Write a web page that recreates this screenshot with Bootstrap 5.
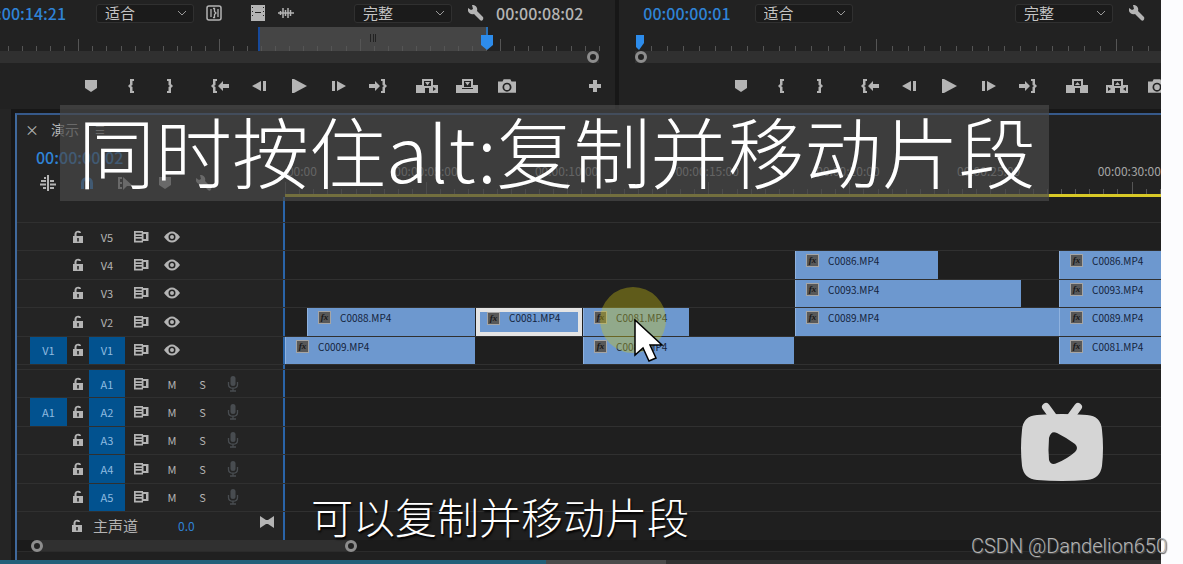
<!DOCTYPE html>
<html lang="zh-CN">
<head>
<meta charset="utf-8">
<meta name="viewport" content="width=device-width, initial-scale=1">
<title>同时按住alt:复制并移动片段</title>
<link href="https://cdn.jsdelivr.net/npm/bootstrap@5.3.0/dist/css/bootstrap.min.css" rel="stylesheet">
<style>
body{background:#fcfcfe;font-family:"Noto Sans CJK SC",sans-serif;font-size:11px;line-height:16px;color:#b4b4b4;overflow:hidden}
button{border:0;padding:0;background:none;color:inherit}
svg{display:block;flex:none}
.ic{width:16px;height:16px;fill:currentColor;stroke:none}
.ic-lg{width:24px;height:18px;fill:currentColor}
.frame{margin-right:22px;background:#171717}
.monitor{background:#222;height:109px}
.mon-source{flex:0 0 53%}
.mon-program{margin-left:4px}
.tc{font-size:16px;font-weight:500;line-height:24px;white-space:nowrap}
.tc-blue{color:#2f83d6}
.monbar{height:26px;margin-bottom:1px}
.pick{appearance:none;width:98px;height:19px;border:1px solid #303030;border-radius:3px;background:#1b1b1b url("data:image/svg+xml,%3Csvg xmlns='http://www.w3.org/2000/svg' viewBox='0 0 10 6'%3E%3Cpath d='M1 1l4 4 4-4' fill='none' stroke='%23999'/%3E%3C/svg%3E") no-repeat right 6px center/10px 6px;color:#c4c4c4;font-size:15px;line-height:16px;padding:0 8px}
.drag{margin-right:12px}
.ruler{height:24px}
.ticks{height:100%}
.ticks i{flex:1 1 0;width:0;height:5px;border-left:1px solid #555}
.ticks i:last-child{flex:0 0 1px}
.ticks i.big{height:12px}
.inout{top:0;bottom:0;left:42%;width:37%;background:#454545;border-left:2px solid #174a9c}
.grip{width:6px;height:8px;margin-top:7px;border:solid #222;border-width:0 1px;background:linear-gradient(#222,#222) center/1px 100% no-repeat}
.zoombar{height:12px;background:#303030}
.knob{width:12px;height:12px;border:3px solid #8d8d8d;border-radius:50%;background:#222;flex:none}
.transport{height:45px;padding-left:71px}
.mon-program .transport{padding-left:102px}
.tbtn{width:40px;height:24px;flex:none}
.side{width:11px;margin-right:4px;background:#252525}
.panel{margin-top:4px;border-left:2px solid #40699c;border-top:2px solid #36598a;background:#202020;min-width:0}
.headcol{width:268px;flex:none;background:#242424}
.tracks .headcol{border-right:2px solid #2a64a8}
.tophead{height:82px;padding:6px 0 0 8px}
.tabname{font-size:14px;margin-left:12px}
.tabclose{font-size:14px;line-height:16px}
.seqtime{padding:8px 0 6px 11px}
.toolrow{gap:23px;padding-left:15px}
.gapstrip{height:25px}
.lane{flex:1 1 0;min-width:0;overflow:hidden;background:#1f1f1f}
.video,.audio{display:grid;grid-template-rows:repeat(5,1fr);height:142px}
.trk{border-top:1px solid #303030;min-height:0}
.split{height:5px;border-top:1px solid #303030}
.cells{display:grid;grid-template-columns:37px 22px 36px 32px 30px 31px 30px;padding-left:13px}
.cells>*{display:flex;align-items:center;justify-content:center}
.on{background:#02528f;color:#8fbbe0}
.clip{position:absolute;top:0;bottom:0;background:#6d98cf;border-left:1px solid #8fb2df;color:#15243c;font-size:10px;padding:2px 0 0 10px;gap:9px;display:flex;align-items:start;white-space:nowrap;overflow:hidden}
.clip.sel{border:4px solid #e4e4e4;padding:0 0 0 7px;line-height:12px}
.clip.sel .fx{margin-top:0}
.fx{width:13px;height:13px;margin-top:1px;background:#585858;border:1px solid #a5a5a5;color:#171717;font:italic bold 9px/10px "Liberation Serif",serif;text-align:center;flex:none}
.tlabels{margin-left:-8%;font-size:12px;color:#a5a5a5}
.tlabels span{flex:0 0 14.87%;text-align:center}
.tlruler{height:18px;border-bottom:3px solid #d8c927}
.master{height:29px}
.bottomzoom{height:12px;background:#1b1b1b;border-bottom:1px solid #2b2b2b}
.bottomzoom .span{width:314px;margin-left:17px;background:#303030}
.progressline{height:4px;background:#313131}
.played{width:47%;background:#23607a}.loaded{width:10.4%;background:#4b4b4b}
.banner{left:60px;right:112px;top:105px;height:96px;background:rgba(72,72,72,.7);color:#fff;font-size:77px;line-height:90px;font-weight:300;padding-left:18px;white-space:nowrap}
.caption{left:311px;top:490px;font-size:42px;line-height:52px;font-weight:200;color:#fff;text-shadow:1px 2px 2px #000;white-space:nowrap}
.tvlogo{right:57px;top:402px;width:84px;height:80px}
.wmark{right:-8px;top:534px;font:300 20px/24px Roboto,sans-serif;color:#b4b4b4;text-shadow:1px 1px 1px #555;white-space:nowrap}
.halo{left:39.8%;top:90px;margin-left:-34px;width:66px;height:66px;border-radius:50%;background:rgba(212,200,20,.36)}
.arrow{left:39.8%;top:122px;width:30px;height:46px}
</style>
</head>
<body>
<svg class="d-none" aria-hidden="true">
<symbol id="marker" viewBox="0 0 16 16"><path d="M2 2h12v8l-6 4-6-4z"/></symbol>
<symbol id="bin" viewBox="0 0 16 16"><path d="M11 1H7v5L5 8l2 2v5h4v-2H9.500V9L8 8l1.500-1V3H11z"/></symbol>
<symbol id="bout" viewBox="0 0 16 16"><path d="M4 1h4v5l2 2-2 2v5H4v-2h1.500V9L7 8 5.500 7V3H4z"/></symbol>
<symbol id="goin" viewBox="0 0 24 18"><path d="M10 2H6v5L4 9l2 2v5h4v-2H8.500v-4L7 9l1.500-1V4H10zM11 9l5-5v3h6v4h-6v3z"/></symbol>
<symbol id="goout" viewBox="0 0 24 18"><path d="M14 2h4v5l2 2-2 2v5h-4v-2h1.500v-4L17 9l-1.500-1V4H14zM13 9L8 4v3H2v4h6v3z"/></symbol>
<symbol id="back" viewBox="0 0 16 16"><path d="M10 3v10L1 8zM12 3h3v10h-3z"/></symbol>
<symbol id="fwd" viewBox="0 0 16 16"><path d="M6 3v10l9-5zM1 3h3v10H1z"/></symbol>
<symbol id="play" viewBox="0 0 16 16"><path d="M1 1h2l13 7-13 7H1z"/></symbol>
<symbol id="insert" viewBox="0 0 24 18"><path d="M7 2h11v6h5v8h-9v-5h-4v5H1V8h6zm2 2v5h7V4zm1 1h5l-2.500 3.500zM18 10v4l3-2z" fill-rule="evenodd"/></symbol>
<symbol id="over" viewBox="0 0 24 18"><path d="M7 2h11v6h5v8H1V8h6zm2 2v6h7V4zm1 1h5l-2.500 3.500zM7 11v1h11v-1z" fill-rule="evenodd"/></symbol>
<symbol id="lift" viewBox="0 0 24 18"><path d="M7 2h11v6h5v8h-8v-5h-5v5H1V8h6zm2 2v5h7V4zm1 4l2.500-3L15 8z" fill-rule="evenodd"/></symbol>
<symbol id="extract" viewBox="0 0 24 18"><path d="M7 2h11v6h5v8h-8v-5h-5v5H1V8h6zm2 2v5h7V4zm1 4l2.500-3L15 8zM3 10v4l3-2zm18 0v4l-3-2z" fill-rule="evenodd"/></symbol>
<symbol id="cam" viewBox="0 0 18 16"><path d="M1 4h4l1-2h6l1 2h4v10H1zm8 1a4 4 0 100 8 4 4 0 000-8zm0 1.500a2.500 2.500 0 110 5 2.500 2.500 0 010-5z" fill-rule="evenodd"/></symbol>
<symbol id="plus" viewBox="0 0 16 16"><path d="M6 2h4v4h4v4h-4v4H6v-4H2V6h4z"/></symbol>
<symbol id="wrench" viewBox="0 0 16 16"><path d="M4 0l1 4-2 1L0 3c-1 4 2 7 6 6l6 6c2 2 4-1 3-3L9 6C10 3 8 0 4 0z"/></symbol>
<symbol id="brbox" viewBox="0 0 16 16"><rect x="1" y="1" width="14" height="14" rx="2" fill="none" stroke="currentColor" stroke-width="1.500"/><path d="M5 4v8M7 3.500h1.500v3L10 8l-1.500 1.500v3H7M12 4v8" fill="none" stroke="currentColor" stroke-width="1.300"/></symbol>
<symbol id="film" viewBox="0 0 16 16"><path d="M1 0h14v16H1zm1 2v1h1V2zm0 4v1h1V6zm0 4v1h1v-1zm11-8v1h1V2zm0 4v1h1V6zm0 4v1h1v-1zM5 7v1h6V7z" fill-rule="evenodd"/></symbol>
<symbol id="wave" viewBox="0 0 16 16"><path d="M0 8h16M2.500 6v4M5 3v10M7.500 5v6M10 3v10M12.500 5v6" stroke="currentColor" stroke-width="1.500"/></symbol>
<symbol id="lock" viewBox="0 0 16 16"><path d="M3 7h1.500V5c0-4 6.500-4.500 6.500-1H9c-.5-1-2.500-.8-2.500 1v2H13v7H3zm4.200 2v3.500h1.600V9z" fill-rule="evenodd"/></symbol>
<symbol id="sync" viewBox="0 0 16 16"><path d="M1 2h9v1h5.500v9H10v1.500H1zm1.700 1.700v1.600h6V3.700zm0 3.300v1h6V7zm0 2.700v2h6v-2zM10.500 5v5h2.500V5z" fill-rule="evenodd"/></symbol>
<symbol id="eye" viewBox="0 0 16 16"><path d="M0 8q8-11 16 0-8 11-16 0zm8-3.500a3.500 3.500 0 100 7 3.500 3.500 0 000-7zM8 6a2 2 0 110 4 2 2 0 010-4z" fill-rule="evenodd"/></symbol>
<symbol id="mic" viewBox="0 0 16 16"><rect x="5.500" y="0" width="5" height="10" rx="2.500"/><path d="M3.500 6v2.500c0 5 9 5 9 0V6M8 12v3M5 15h6" fill="none" stroke="currentColor" stroke-width="1.300"/></symbol>
<symbol id="nest" viewBox="0 0 16 16"><path d="M8 0v16M1 6h5M0 9.500h6M3 13h3M4 3h2M10 6h4M10 9.500h6M10 13h4" stroke="currentColor" stroke-width="2"/></symbol>
<symbol id="magnet" viewBox="0 0 16 16"><path d="M3.500 14V8c0-6 9-6 9 0v6" fill="none" stroke="currentColor" stroke-width="3"/></symbol>
<symbol id="linked" viewBox="0 0 16 16"><path d="M5 2l10 9H9l-4 4zM0 2h4v2H2v3h2v2H2v3h2v2H0z"/></symbol>
<symbol id="bowtie" viewBox="0 0 16 16"><path d="M1 2l6 4h2l6-4v12l-6-4H7l-6 4z"/></symbol>
</svg>

<main class="frame position-relative overflow-hidden">
  <div class="d-flex">
    <section class="monitor mon-source overflow-hidden">
      <div class="monbar d-flex align-items-center">
        <span class="tc tc-blue" style="margin-left:-3px">:00:14:21</span>
        <select class="pick ms-auto" aria-label="缩放级别"><option>适合</option></select>
        <button class="ms-2 ps-1" aria-label="范围"><svg class="ic"><use href="#brbox"/></svg></button>
        <button class="ms-4 ps-1" aria-label="仅视频"><svg class="ic"><use href="#film"/></svg></button>
        <button class="ms-2 ps-1 drag" aria-label="仅音频"><svg class="ic"><use href="#wave"/></svg></button>
        <select class="pick ms-5 me-3" aria-label="分辨率"><option>完整</option></select>
        <button aria-label="设置"><svg class="ic"><use href="#wrench"/></svg></button>
        <span class="tc ms-2 ps-1 pe-4 me-2">00:00:08:02</span>
      </div>
      <div class="ruler position-relative ps-2 pe-3">
        <div class="inout position-absolute d-flex justify-content-center"><span class="grip"></span></div>
        <div class="ticks d-flex align-items-end position-relative" data-count="42" data-big="10" data-first="5"></div>
        <svg class="position-absolute top-0" style="left:78%" width="14" height="24"><path d="M7 0v9" stroke="#2d8ceb" stroke-width="1.500"/><path d="M1 8h12v10l-6 5-6-5z" fill="#2d8ceb"/></svg>
      </div>
      <div class="zoombar d-flex justify-content-end me-3"><span class="knob"></span></div>
      <div class="transport d-flex align-items-center" data-set="insert,over"></div>
    </section>
    <section class="monitor mon-program flex-fill overflow-hidden">
      <div class="monbar d-flex align-items-center ps-4">
        <span class="tc tc-blue">00:00:00:01</span>
        <select class="pick ms-4 me-auto" aria-label="缩放级别"><option>适合</option></select>
        <select class="pick me-3" aria-label="分辨率"><option>完整</option></select>
        <button class="me-3" aria-label="设置"><svg class="ic"><use href="#wrench"/></svg></button>
      </div>
      <div class="ruler position-relative ps-4">
        <svg class="position-absolute top-0 start-0 ms-3" width="10" height="24"><path d="M1 8h8v8l-5 7-3-3z" fill="#2d8ceb"/></svg>
        <div class="ticks d-flex align-items-end ms-2 me-2 pe-1" data-count="31" data-big="15" data-first="14"></div>
      </div>
      <div class="zoombar ms-3"><span class="knob d-block"></span></div>
      <div class="transport d-flex align-items-center" data-set="lift,extract"></div>
    </section>
  </div>

  <div class="d-flex">
    <div class="side"></div>
    <section class="panel flex-fill">
      <div class="d-flex">
        <div class="headcol tophead">
          <div class="d-flex align-items-center">
            <button class="tabclose" aria-label="关闭">×</button><span class="tabname">演示</span><span class="ms-3">☰</span>
          </div>
          <div class="tc tc-blue seqtime">00:00:00:02</div>
          <div class="d-flex toolrow">
            <button aria-label="嵌套"><svg class="ic"><use href="#nest"/></svg></button>
            <button class="tc-blue" aria-label="对齐"><svg class="ic"><use href="#magnet"/></svg></button>
            <button aria-label="链接选择"><svg class="ic"><use href="#linked"/></svg></button>
            <button aria-label="添加标记"><svg class="ic"><use href="#marker"/></svg></button>
            <button aria-label="时间轴设置"><svg class="ic"><use href="#wrench"/></svg></button>
          </div>
        </div>
        <div class="lane d-flex flex-column justify-content-end" style="background:#222">
          <div class="tlabels d-flex"><span>00:00:00:00</span><span>00:00:05:00</span><span>00:00:10:00</span><span>00:00:15:00</span><span>00:00:20:00</span><span>00:00:25:00</span><span>00:00:30:00</span></div>
          <div class="tlruler"><div class="ticks d-flex align-items-end" data-count="62" data-big="10" data-first="0"></div></div>
        </div>
      </div>
      <div class="tracks position-relative">
        <div class="d-flex gapstrip"><div class="headcol"></div><div class="lane"></div></div>
        <div class="video" id="video"></div>
        <div class="d-flex"><div class="headcol split"></div><div class="lane split"></div></div>
        <div class="audio" id="audio"></div>
        <div class="trk master d-flex">
          <div class="headcol d-flex align-items-center">
            <button class="ms-5 ps-1" aria-label="锁定"><svg class="ic"><use href="#lock"/></svg></button>
            <span class="ps-2" style="font-size:15px">主声道</span>
            <span class="tc-blue ms-4 ps-3" style="font-size:12px">0.0</span>
            <button class="ms-auto me-2 mb-2" aria-label="关键帧"><svg class="ic"><use href="#bowtie"/></svg></button>
          </div>
          <div class="lane"></div>
        </div>
      </div>
      <div class="bottomzoom d-flex"><div class="span d-flex justify-content-between"><span class="knob" style="margin-left:-3px"></span><span class="knob" style="margin-right:-9px"></span></div></div>
      <div class="pt-2"></div>
    </section>
  </div>
  <div class="progressline d-flex"><div class="played"></div><div class="loaded"></div></div>

  <h1 class="banner position-absolute m-0">同时按住alt:复制并移动片段</h1>
  <p class="caption position-absolute m-0">可以复制并移动片段</p>
  <svg class="tvlogo position-absolute" viewBox="0 0 84 80" aria-label="视频"><path d="M26 5l8 11M58 5l-8 11" stroke="#d5d5d5" stroke-width="8" stroke-linecap="round"/><path fill="#d5d5d5" fill-rule="evenodd" d="M17 13Q42 11 67 13Q81 14 82 28Q84 46 82 64Q80 77 67 78Q42 80 17 78Q4 77 2 64Q0 46 2 28Q3 14 17 13ZM29 36Q28 48 29 58Q31 64 37 61Q47 57 55 50Q59 46 55 42Q47 36 37 31Q31 28 29 36Z"/></svg>
</main>
<div class="position-absolute top-0 start-0 end-0 me-4"><div class="wmark position-absolute">CSDN @Dandelion650</div></div>

<script>
const icon = (n, c = 'ic') => `<svg class="${c}"><use href="#${n}"/></svg>`;

// ruler ticks
document.querySelectorAll('.ticks').forEach(r => {
  const {count, big, first} = r.dataset;
  for (let i = 0; i <= +count; i++) {
    const t = document.createElement('i');
    if (i % big == first) t.className = 'big';
    r.append(t);
  }
});

// transport controls of both monitors
document.querySelectorAll('.transport').forEach(t => {
  const [a, b] = t.dataset.set.split(',');
  const btn = (n, label, c) => `<button class="tbtn d-flex align-items-center justify-content-center" aria-label="${label}">${icon(n, c)}</button>`;
  t.innerHTML =
    `<div class="d-flex me-2">${btn('marker','标记')}${btn('bin','入点')}${btn('bout','出点')}</div>` +
    `<div class="d-flex me-2">${btn('goin','转到入点','ic-lg')}${btn('back','后退')}${btn('play','播放')}${btn('fwd','前进')}${btn('goout','转到出点','ic-lg')}</div>` +
    `<div class="d-flex">${btn(a,a,'ic-lg')}${btn(b,b,'ic-lg')}${btn('cam','导出帧','ic-lg')}</div>` +
    (a == 'insert' ? `<div class="ms-auto">${btn('plus','按钮编辑器')}</div>` : '');
});

// timeline: clips are [start, end, name, selected] on an 876-unit lane
const LANE = 876;
const video = [
  ['V5', '', []],
  ['V4', '', [[510,653,'C0086.MP4'],[774,876,'C0086.MP4']]],
  ['V3', '', [[510,736,'C0093.MP4'],[774,876,'C0093.MP4']]],
  ['V2', '', [[22,190,'C0088.MP4'],[191,297,'C0081.MP4',1],[298,404,'C0081.MP4'],[510,774,'C0089.MP4'],[774,876,'C0089.MP4']]],
  ['V1', 'V1', [[0,190,'C0009.MP4'],[298,509,'C0081.MP4'],[774,876,'C0081.MP4']]]
];
const audio = [['A1',''],['A2','A1'],['A3',''],['A4',''],['A5','']];
const cell = (inner, c = '') => `<button class="${c}">${inner}</button>`;
const clipHtml = ([s, e, n, sel]) => `<div class="clip${sel ? ' sel' : ''}" style="left:${s/LANE*100}%;width:${(e-s)/LANE*100}%"><span class="fx">fx</span><span>${n}</span></div>`;
const row = (name, src, tail, clips, on) =>
  `<div class="trk d-flex"><div class="headcol cells">${src ? cell(src,'on') : '<span></span>'}${cell(icon('lock'))}${cell(name, on ? 'on' : '')}${cell(icon('sync'))}${tail}</div><div class="lane position-relative">${clips.map(clipHtml).join('')}</div></div>`;
document.getElementById('video').innerHTML = video.map(([n, s, c]) => row(n, s, cell(icon('eye')), c, n == 'V1')).join('');
document.getElementById('audio').innerHTML = audio.map(([n, s]) => row(n, s, cell('M') + cell('S') + cell(icon('mic'), 'text-secondary opacity-50'), [], true)).join('');
document.querySelector('.tracks').insertAdjacentHTML('beforeend',
  `<div class="position-absolute top-0 end-0 pe-none" style="left:268px"><div class="halo position-absolute"></div><svg class="arrow position-absolute" viewBox="0 0 30 46"><path d="M1 1v35l8-7 6 13 7-3-6-13h12z" fill="#fff" stroke="#000" stroke-width="1.500"/></svg></div>`);
</script>
<script src="https://cdn.jsdelivr.net/npm/bootstrap@5.3.0/dist/js/bootstrap.bundle.min.js"></script>
</body>
</html>
